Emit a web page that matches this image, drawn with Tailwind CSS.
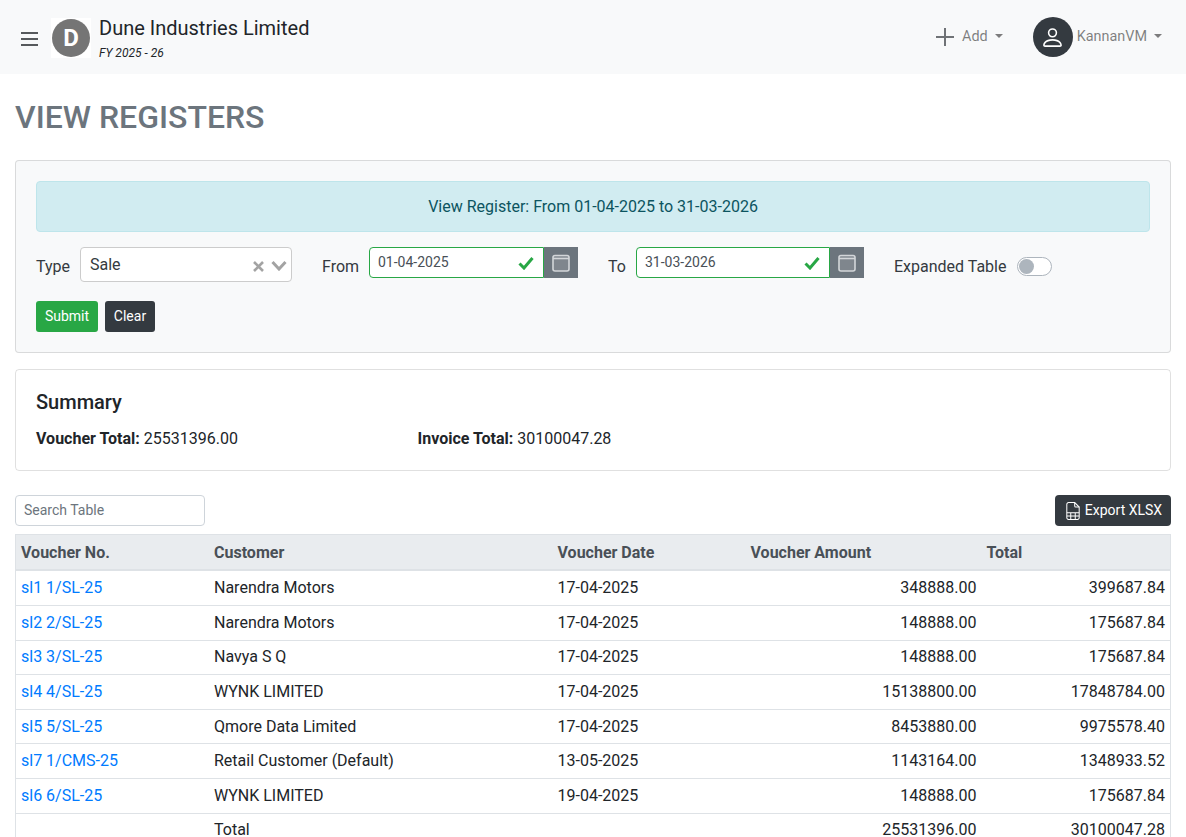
<!DOCTYPE html>
<html lang="en">
<head>
<meta charset="utf-8">
<title>View Registers</title>
<script src="https://cdn.jsdelivr.net/npm/@tailwindcss/browser@4"></script>
</head>
<body class="bg-white text-[#212529] text-base font-['Roboto',sans-serif] h-[837px] overflow-hidden">
<header class="h-[74px] bg-[#f8f9fa] flex items-center">
  <svg class="ml-[20px] w-[19px] h-[16px] mt-[3px]" viewBox="0 0 19 16" fill="none" stroke="#212529" stroke-width="1.3"><path d="M1 2h17M1 8h17M1 14h17"/></svg>
  <div class="ml-[12px] w-[40px] h-[40px] bg-white flex items-center justify-center mt-[1px]">
    <div class="w-[38px] h-[38px] rounded-full bg-[#757575] text-white flex items-center justify-center text-[24px] font-bold leading-none">D</div>
  </div>
  <div class="ml-[8px] mt-[3px] flex flex-col">
    <span class="text-[20px] leading-[24px]">Dune Industries Limited</span>
    <span class="text-[12px] italic leading-[18px] mt-[4px]">FY 2025 - 26</span>
  </div>
  <div class="ml-auto flex items-center text-[#00000080] text-[14.400px]">
    <svg class="w-[20px] h-[20px] mb-[1px]" viewBox="0 0 20 20" fill="none" stroke="#6f7276" stroke-width="2"><path d="M10 1v18M1 10h18"/></svg>
    <span class="ml-[7px]">Add</span>
    <span class="ml-[7px] mb-[3px] w-0 h-0 border-x-[4px] border-x-transparent border-t-[4px] border-t-[#00000080]"></span>
    <div class="ml-[30px] w-[40px] h-[40px] rounded-full bg-[#343a40] flex items-center justify-center">
      <svg class="w-[25px] h-[25px]" viewBox="0 0 16 16" fill="#fff"><path d="M8 8a3 3 0 1 0 0-6 3 3 0 0 0 0 6Zm2-3a2 2 0 1 1-4 0 2 2 0 0 1 4 0Zm4 8c0 1-1 1-1 1H3s-1 0-1-1 1-4 6-4 6 3 6 4Zm-1-.004c-.001-.246-.154-.986-.832-1.664C11.516 10.68 10.289 10 8 10c-2.29 0-3.516.68-4.168 1.332-.678.678-.83 1.418-.832 1.664h10Z"/></svg>
    </div>
    <span class="ml-[4px]">KannanVM</span>
    <span class="ml-[7px] mb-[3px] mr-[24px] w-0 h-0 border-x-[4px] border-x-transparent border-t-[4px] border-t-[#00000080]"></span>
  </div>
</header>
<main class="px-[15px]">
  <h1 class="mt-[24px] text-[32px] leading-[38px] font-medium text-[#6c757d] tracking-normal">VIEW REGISTERS</h1>
  <section class="mt-[24px] h-[193px] bg-[#f8f9fa] border border-black/12 rounded p-[20px]">
    <div class="h-[51px] bg-[#d1ecf1] border border-[#bee5eb] text-[#0c5460] rounded flex items-center justify-center">View Register: From 01-04-2025 to 31-03-2026</div>
    <div class="mt-[15px] flex items-center h-[35px] text-[#343a40]">
      <label class="w-[44px] mt-[4px]">Type</label>
      <div class="w-[212px] h-[35px] bg-white border border-[#ccc] rounded flex items-center pl-[9px] pr-[3px]">
        <span class="mt-[1px]">Sale</span>
        <svg class="ml-auto mt-[4px] w-[11px] h-[11px]" viewBox="0 0 11 11" stroke="#a3a3a3" stroke-width="2.6" fill="none"><path d="M1 1l9 9M10 1l-9 9"/></svg>
        <svg class="ml-[7px] mr-[1px] mt-[2px] w-[16px] h-[11px]" viewBox="0 0 16 11" stroke="#a3a3a3" stroke-width="3" fill="none"><path d="M1.5 2l6.5 7 6.5-7"/></svg>
      </div>
      <label class="ml-[30px] w-[47px] mt-[4px]">From</label>
      <div class="flex h-[31px] self-start">
        <div class="w-[175px] bg-white border border-[#28a745] rounded-l flex items-center pl-[8px] pr-[9px] text-[14px] text-[#495057]">
          <span>01-04-2025</span>
          <svg class="ml-auto w-[16px] h-[14px]" viewBox="0 0 16 14" stroke="#28a745" stroke-width="3" fill="none"><path d="M1.500 7.500l4.500 4.500 8.500-10"/></svg>
        </div>
        <div class="w-[34px] bg-[#6c757d] flex items-center justify-center">
          <svg class="w-[18px] h-[18px]" viewBox="0 0 18 18" fill="#7f868d" stroke="#d3d6d9" stroke-width="1.600"><rect x="1" y="1.500" width="16" height="15.500" rx="2"/><path d="M1 4.500h16"/></svg>
        </div>
      </div>
      <label class="ml-[30px] w-[28px] mt-[4px]">To</label>
      <div class="flex h-[31px] self-start">
        <div class="w-[194px] bg-white border border-[#28a745] rounded-l flex items-center pl-[8px] pr-[9px] text-[14px] text-[#495057]">
          <span>31-03-2026</span>
          <svg class="ml-auto w-[16px] h-[14px]" viewBox="0 0 16 14" stroke="#28a745" stroke-width="3" fill="none"><path d="M1.500 7.500l4.500 4.500 8.500-10"/></svg>
        </div>
        <div class="w-[34px] bg-[#6c757d] flex items-center justify-center">
          <svg class="w-[18px] h-[18px]" viewBox="0 0 18 18" fill="#7f868d" stroke="#d3d6d9" stroke-width="1.600"><rect x="1" y="1.500" width="16" height="15.500" rx="2"/><path d="M1 4.500h16"/></svg>
        </div>
      </div>
      <label class="ml-[30px] mt-[4px]">Expanded Table</label>
      <div class="ml-[11px] mt-[4px] w-[35px] h-[19px] bg-white border border-[#adb5bd] rounded-full flex items-center px-[1px]">
        <div class="w-[15px] h-[15px] bg-[#adb5bd] rounded-full"></div>
      </div>
    </div>
    <div class="mt-[19px] flex gap-[7px] text-[14px] text-white">
      <button class="w-[62px] h-[31px] bg-[#28a745] rounded-[3px]">Submit</button>
      <button class="w-[50px] h-[31px] bg-[#343a40] rounded-[3px]">Clear</button>
    </div>
  </section>
  <section class="mt-[16px] h-[102px] border border-black/12 rounded px-[20px] pt-[20px]">
    <h2 class="text-[20px] leading-[24px] font-medium">Summary</h2>
    <div class="mt-[13px] flex leading-[24px]">
      <p class="w-[381.500px]"><b class="font-bold">Voucher Total:</b> 25531396.00</p>
      <p><b class="font-bold">Invoice Total:</b> 30100047.28</p>
    </div>
  </section>
  <div class="mt-[24px] flex justify-between h-[31px]">
    <input class="w-[190px] h-[31px] border border-[#ced4da] rounded px-[8px] pb-[2px] text-[14px] placeholder:text-[#6c757d]" placeholder="Search Table">
    <button class="w-[116px] h-[31px] bg-[#343a40] text-white rounded text-[14px] flex items-center justify-center gap-[3px]">
      <svg class="w-[18px] h-[18px]" viewBox="0 0 16 16" fill="none" stroke="#fff" stroke-width="0.9"><path d="M13.500 14V4.500L9.500.5H4A1.500 1.500 0 0 0 2.500 2v12A1.500 1.500 0 0 0 4 15.500h8a1.500 1.500 0 0 0 1.500-1.500Z"/><path d="M9.500.5v3a1 1 0 0 0 1 1h3M2.500 9.500h11M2.500 12.500h11M6 9.500v6M10 9.500v6"/></svg>
      Export XLSX
    </button>
  </div>
  <div class="mt-[8px] border-x border-[#dee2e6]">
  <table class="w-full table-fixed border-collapse">
    <colgroup><col class="w-[193px]"><col class="w-[343.500px]"><col class="w-[193px]"><col class="w-[236px]"><col class="w-[188.500px]"></colgroup>
    <thead class="bg-[#e9ecef] text-[#495057] text-left">
      <tr class="border-t border-b-2 border-[#dee2e6]"><th class="px-[5px] pt-[6.300px] pb-[4.100px] font-bold">Voucher No.</th><th class="px-[5px] pt-[6.300px] pb-[4.100px] font-bold">Customer</th><th class="px-[5px] pt-[6.300px] pb-[4.100px] font-bold">Voucher Date</th><th class="px-[5px] pt-[6.300px] pb-[4.100px] font-bold">Voucher Amount</th><th class="px-[5px] pt-[6.300px] pb-[4.100px] font-bold">Total</th></tr>
    </thead>
    <tbody>
      <tr class="border-b border-[#dee2e6]"><td class="px-[5px] py-[4.800px]"><a class="text-[#007bff]" href="#">sl1 1/SL-25</a></td><td class="px-[5px]">Narendra Motors</td><td class="px-[5px]">17-04-2025</td><td class="px-[5px] text-right">348888.00</td><td class="px-[5px] text-right">399687.84</td></tr>
      <tr class="border-b border-[#dee2e6]"><td class="px-[5px] py-[4.800px]"><a class="text-[#007bff]" href="#">sl2 2/SL-25</a></td><td class="px-[5px]">Narendra Motors</td><td class="px-[5px]">17-04-2025</td><td class="px-[5px] text-right">148888.00</td><td class="px-[5px] text-right">175687.84</td></tr>
      <tr class="border-b border-[#dee2e6]"><td class="px-[5px] py-[4.800px]"><a class="text-[#007bff]" href="#">sl3 3/SL-25</a></td><td class="px-[5px]">Navya S Q</td><td class="px-[5px]">17-04-2025</td><td class="px-[5px] text-right">148888.00</td><td class="px-[5px] text-right">175687.84</td></tr>
      <tr class="border-b border-[#dee2e6]"><td class="px-[5px] py-[4.800px]"><a class="text-[#007bff]" href="#">sl4 4/SL-25</a></td><td class="px-[5px]">WYNK LIMITED</td><td class="px-[5px]">17-04-2025</td><td class="px-[5px] text-right">15138800.00</td><td class="px-[5px] text-right">17848784.00</td></tr>
      <tr class="border-b border-[#dee2e6]"><td class="px-[5px] py-[4.800px]"><a class="text-[#007bff]" href="#">sl5 5/SL-25</a></td><td class="px-[5px]">Qmore Data Limited</td><td class="px-[5px]">17-04-2025</td><td class="px-[5px] text-right">8453880.00</td><td class="px-[5px] text-right">9975578.40</td></tr>
      <tr class="border-b border-[#dee2e6]"><td class="px-[5px] py-[4.800px]"><a class="text-[#007bff]" href="#">sl7 1/CMS-25</a></td><td class="px-[5px]">Retail Customer (Default)</td><td class="px-[5px]">13-05-2025</td><td class="px-[5px] text-right">1143164.00</td><td class="px-[5px] text-right">1348933.52</td></tr>
      <tr class="border-b border-[#dee2e6]"><td class="px-[5px] py-[4.800px]"><a class="text-[#007bff]" href="#">sl6 6/SL-25</a></td><td class="px-[5px]">WYNK LIMITED</td><td class="px-[5px]">19-04-2025</td><td class="px-[5px] text-right">148888.00</td><td class="px-[5px] text-right">175687.84</td></tr>
      <tr><td class="px-[5px] py-[4.800px]"></td><td class="px-[5px] py-[4.800px]">Total</td><td class="px-[5px]"></td><td class="px-[5px] text-right">25531396.00</td><td class="px-[5px] text-right">30100047.28</td></tr>
    </tbody>
  </table>
  </div>
</main>
</body>
</html>
